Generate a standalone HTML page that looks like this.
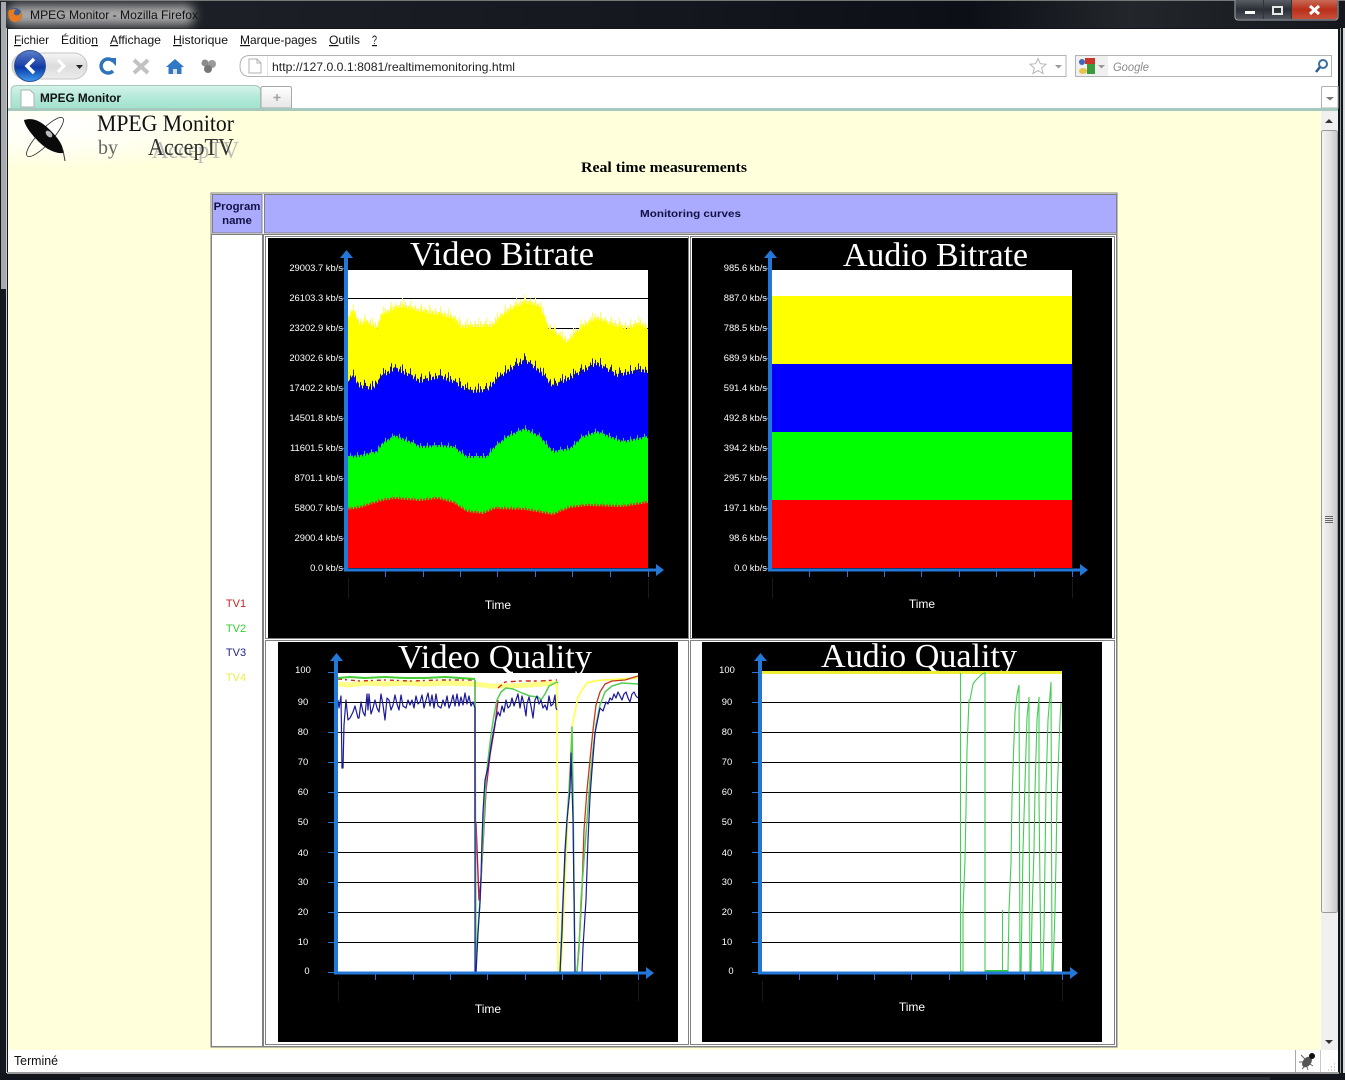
<!DOCTYPE html>
<html lang="fr"><head><meta charset="utf-8"><title>MPEG Monitor</title>
<style>
html,body{margin:0;padding:0;background:#12161c;overflow:hidden}
svg{display:block}
text{font-family:"Liberation Sans",sans-serif}
.l{fill:#fff;font-size:9.400px;text-anchor:end}
.c{fill:#fff;font-size:9.400px;text-anchor:middle}
.t{fill:#fff;font-family:"Liberation Serif",serif;font-size:34px}
.m{fill:#111;font-size:12px}
.ti{fill:#fff;font-size:12px;text-anchor:middle}
.s{font-family:"Liberation Serif",serif}
</style></head><body>
<svg width="1345" height="1080" viewBox="0 0 1345 1080" xmlns="http://www.w3.org/2000/svg">
<defs>
<linearGradient id="tb" x1="0" x2="1" y1="0" y2="0"><stop offset="0" stop-color="#20242a"/><stop offset=".5" stop-color="#14181e"/><stop offset=".72" stop-color="#0c1016"/><stop offset=".84" stop-color="#23272c"/><stop offset="1" stop-color="#14181d"/></linearGradient>
<filter id="bl" x="-10%" y="-40%" width="120%" height="180%"><feGaussianBlur stdDeviation="5"/></filter>
<linearGradient id="tab" x1="0" x2="0" y1="0" y2="1"><stop offset="0" stop-color="#d5f3ea"/><stop offset=".5" stop-color="#b4e9d9"/><stop offset="1" stop-color="#a2e2cd"/></linearGradient>
<linearGradient id="tabg" x1="0" x2="0" y1="0" y2="1"><stop offset="0" stop-color="#fff"/><stop offset="1" stop-color="#e6e6e6"/></linearGradient>
<linearGradient id="bk" x1="0" x2="0" y1="0" y2="1"><stop offset="0" stop-color="#5c80cc"/><stop offset=".5" stop-color="#1a3fa8"/><stop offset=".55" stop-color="#0a3aa8"/><stop offset="1" stop-color="#3f9cf0"/></linearGradient>
<linearGradient id="pill" x1="0" x2="0" y1="0" y2="1"><stop offset="0" stop-color="#f6f6f6"/><stop offset=".5" stop-color="#dcdcdc"/><stop offset="1" stop-color="#ececec"/></linearGradient>
<linearGradient id="sb" x1="0" x2="1" y1="0" y2="0"><stop offset="0" stop-color="#f5f5f5"/><stop offset=".5" stop-color="#e4e4e4"/><stop offset="1" stop-color="#c8c8c8"/></linearGradient>
<linearGradient id="cl" x1="0" x2="0" y1="0" y2="1"><stop offset="0" stop-color="#c96a55"/><stop offset=".5" stop-color="#b82f18"/><stop offset="1" stop-color="#c9503c"/></linearGradient>
<linearGradient id="wb" x1="0" x2="0" y1="0" y2="1"><stop offset="0" stop-color="#5a5f66"/><stop offset=".5" stop-color="#2a2e35"/><stop offset="1" stop-color="#50555c"/></linearGradient>
<radialGradient id="lg" cx=".2" cy=".25" r=".72"><stop offset="0" stop-color="#fff"/><stop offset=".5" stop-color="#fffff2"/><stop offset="1" stop-color="#ffffdc"/></radialGradient>

<pattern id="yd" width="3" height="10" patternUnits="userSpaceOnUse"><rect width="2" height="10" fill="#ffff22"/></pattern>
<pattern id="ys" width="5" height="10" patternUnits="userSpaceOnUse"><rect width="1" height="10" fill="#ffff44"/></pattern>
<pattern id="yx" width="19" height="10" patternUnits="userSpaceOnUse"><rect x="3" width="1" height="10" fill="#ffff66"/><rect x="11" width="1" height="10" fill="#ffff66"/></pattern>
<pattern id="bd" width="3" height="10" patternUnits="userSpaceOnUse"><rect width="2" height="10" fill="#0808e0"/></pattern>
<pattern id="bs" width="5" height="10" patternUnits="userSpaceOnUse"><rect width="1" height="10" fill="#10108c"/></pattern>
<pattern id="bx" width="19" height="10" patternUnits="userSpaceOnUse"><rect x="3" width="1" height="10" fill="#1a1a66"/><rect x="11" width="1" height="10" fill="#1a1a66"/></pattern>
<pattern id="gd" width="3" height="10" patternUnits="userSpaceOnUse"><rect width="2" height="10" fill="#0ff00f"/></pattern>
<pattern id="gs" width="7" height="10" patternUnits="userSpaceOnUse"><rect width="1" height="10" fill="#30c060"/></pattern>
<pattern id="rd" width="3" height="10" patternUnits="userSpaceOnUse"><rect width="2" height="10" fill="#d04010"/></pattern>
<pattern id="rs" width="7" height="10" patternUnits="userSpaceOnUse"><rect width="1" height="10" fill="#909020"/></pattern>

<polygon id="py" points="348,320 353,312 360,325 367,323 377,329 382,316 395,309 403,307 420,312 440,315 453,319 462,328 477,327 492,327 507,312 525,303 540,307 548,328 567,343 583,327 597,319 610,325 627,329 640,325 648,329 648,568 348,568"/>
<polygon id="pb" points="348,385 353,378 360,388 373,390 382,378 395,370 412,378 420,383 440,378 453,383 470,393 487,392 493,385 507,373 525,362 540,373 553,388 573,378 597,365 617,377 640,372 648,373 648,568 348,568"/>
<polygon id="pg" points="348,458 360,457 377,453 382,445 395,437 412,444 420,448 440,447 453,448 467,458 487,458 493,450 507,438 525,430 540,438 553,453 570,450 583,438 597,433 623,443 648,438 648,568 348,568"/>
<polygon id="pr" points="348,510 360,508 382,501 395,499 420,501 438,499 453,503 467,512 483,514 495,509 525,510 553,515 570,508 587,506 623,507 648,503 648,568 348,568"/>

<g id="axes">
<path d="M346 256V570" stroke="#2277d8" stroke-width="4" fill="none"/>
<path d="M344 570H658" stroke="#2277d8" stroke-width="3" fill="none"/>
<path d="M346.500 250l-6.500 8h13zM664 570l-8-6v12z" fill="#2277d8"/>
<path d="M385.500 571v6M423.500 571v6M460.500 571v6M497.500 571v6M535.500 571v6M572.500 571v6M610.500 571v6M648.500 571v6" stroke="#2277d8"/>
<path d="M348.500 578v20M648.500 578v20" stroke="#1a1a1a"/>
</g>
<path id="tk" d="M342 268.500h4M342 298.500h4M342 328.500h4M342 358.500h4M342 388.500h4M342 418.500h4M342 448.500h4M342 478.500h4M342 508.500h4M342 538.500h4M342 568.500h4" stroke="#2277d8"/>
<polyline id="aq" fill="none" points="960.500,673 960.500,971 963,971 963,910 965,860 966,810 967,750 969,700 970,700 973,684 976,680 982,674 985,673 985,971 1002.500,971 1002.500,910 1002.500,971 1008,971 1009,910 1011,863 1012,800 1013,768 1015,712 1017,695 1019,685 1020,971 1021,971 1022,910 1023,850 1025,783 1027,717 1029,697 1029,800 1030,971 1031,971 1032,915 1034,850 1035,790 1037,720 1039,697 1039,800 1041,971 1043,971 1044,930 1045,860 1046,790 1048,720 1050,695 1051,682 1052,971 1053,971 1055,910 1056,860 1057,800 1059,745 1060,720 1061,703"/>
</defs>

<!-- window frame -->
<rect width="1345" height="1080" fill="#12161c"/>
<rect width="1345" height="28" fill="url(#tb)"/>
<rect x="0" y="0" width="1345" height="1" fill="#777"/>
<rect x="1" y="2" width="5" height="287" fill="#a8abae"/>
<rect x="1" y="289" width="5" height="784" fill="#14191f"/>
<rect x="6" y="28" width="1" height="1045" fill="#c4c6c8"/>
<rect x="1340" y="28" width="1" height="1045" fill="#9aa0a6"/>
<rect x="1343" y="28" width="2" height="1045" fill="#d8d8d8"/>
<rect x="7" y="1072" width="1332" height="2" fill="#9a9a9a"/>
<rect x="80" y="1077" width="1190" height="3" fill="#2c3036"/>
<rect x="8" y="5" width="186" height="20" rx="8" fill="#a8a8a8" filter="url(#bl)"/>

<!-- firefox icon -->
<circle cx="15" cy="15" r="7" fill="#3d5f95"/>
<path d="M9 10C7 15 9 22 15 22 21 22 23 16 21 11 20 15 18 16 15 15 13 14 14 11 16 9 13 9 11 10 9 10Z" fill="#e87b20"/>
<text x="30" y="19" font-size="12" fill="#111" textLength="168" lengthAdjust="spacingAndGlyphs">MPEG Monitor - Mozilla Firefox</text>

<!-- window buttons -->
<rect x="1235" y="-2" width="103" height="22" rx="3" fill="#30343a" stroke="#a8abae"/>
<rect x="1236" y="0" width="27" height="19" fill="url(#wb)"/>
<rect x="1264" y="0" width="27" height="19" fill="url(#wb)"/>
<rect x="1292" y="0" width="45" height="19" fill="url(#cl)"/>
<rect x="1245" y="11" width="10" height="3" fill="#fff"/>
<rect x="1273" y="7" width="9" height="7" fill="none" stroke="#e8e8e8" stroke-width="2"/>
<path d="M1310 6l9 8M1319 6l-9 8" stroke="#fff" stroke-width="3"/>

<!-- browser chrome white -->
<rect x="8" y="29" width="1330" height="79" fill="#fff"/>

<!-- menu -->
<text class="m" y="44" x="14" textLength="35" lengthAdjust="spacingAndGlyphs"><tspan text-decoration="underline">F</tspan>ichier</text>
<text class="m" y="44" x="61" textLength="37" lengthAdjust="spacingAndGlyphs">Éditio<tspan text-decoration="underline">n</tspan></text>
<text class="m" y="44" x="110" textLength="51" lengthAdjust="spacingAndGlyphs"><tspan text-decoration="underline">A</tspan>ffichage</text>
<text class="m" y="44" x="173" textLength="55" lengthAdjust="spacingAndGlyphs"><tspan text-decoration="underline">H</tspan>istorique</text>
<text class="m" y="44" x="240" textLength="77" lengthAdjust="spacingAndGlyphs"><tspan text-decoration="underline">M</tspan>arque-pages</text>
<text class="m" y="44" x="329" textLength="31" lengthAdjust="spacingAndGlyphs"><tspan text-decoration="underline">O</tspan>utils</text>
<text class="m" y="44" x="372" textLength="5" lengthAdjust="spacingAndGlyphs"><tspan text-decoration="underline">?</tspan></text>

<!-- nav -->
<rect x="12" y="53" width="75" height="26" rx="13" fill="url(#pill)" stroke="#c4c4c4"/>
<circle cx="30" cy="66" r="15.500" fill="url(#bk)" stroke="#30508f"/>
<path d="M34 59l-7 7 7 7" fill="none" stroke="#fff" stroke-width="3.400"/>
<path d="M58 60l6 6-6 6" fill="none" stroke="#fff" stroke-width="3"/>
<path d="M76 65h7l-3.500 4z" fill="#222"/>
<path d="M113 61A7 7 0 1 0 113 71" fill="none" stroke="#2f73bd" stroke-width="3.500"/>
<path d="M108 58l8 0 0 8z" fill="#2f73bd"/>
<path d="M134 60l14 13M148 60l-14 13" stroke="#c2c2c2" stroke-width="4"/>
<path d="M166 67l9-8 9 8h-2.500v7h-13v-7z" fill="#2f78c4"/>
<rect x="173" y="69" width="4" height="5" fill="#ddd"/>
<circle cx="205" cy="63" r="3.500" fill="#8b8b8b"/><circle cx="212" cy="64" r="4" fill="#9a9a9a"/><circle cx="208" cy="69" r="4" fill="#777"/>

<!-- url bar -->
<path d="M250 55.500H1066V76.500H250Q240 76.500 240 66T250 55.500Z" fill="#fff" stroke="#b3b3b3"/>
<path d="M249 59h8l4 4v10h-12z" fill="#fff" stroke="#b0b0b0"/>
<path d="M257 59v4h4" fill="none" stroke="#b0b0b0"/>
<rect x="267" y="56" width="1" height="20" fill="#e4e4e4"/>
<text x="272" y="71" font-size="12" fill="#222" textLength="243" lengthAdjust="spacingAndGlyphs">http://127.0.0.1:8081/realtimemonitoring.html</text>
<path d="M1038 58.500l2.300 5.200 5.700.6-4.300 3.700 1.300 5.500-5-2.900-5 2.900 1.300-5.500-4.300-3.700 5.700-.6z" fill="#fff" stroke="#b4b4b4"/>
<path d="M1055 65h7l-3.500 3.500z" fill="#999"/>

<!-- search bar -->
<rect x="1075.500" y="55.500" width="256" height="21" fill="#fff" stroke="#b3b3b3"/>
<rect x="1076" y="56" width="32" height="20" fill="#f0f0f0"/>
<rect x="1085" y="58" width="10" height="6" fill="#c8362a"/>
<rect x="1087" y="64" width="8" height="10" fill="#3a9a3e"/>
<circle cx="1082" cy="62" r="3" fill="#3a66c0"/>
<ellipse cx="1083" cy="71" rx="4" ry="3" fill="#e8c24a"/>
<path d="M1098 65h7l-3.500 3.500z" fill="#999"/>
<text x="1113" y="71" font-size="12" font-style="italic" fill="#8a8a8a" textLength="36" lengthAdjust="spacingAndGlyphs">Google</text>
<circle cx="1323" cy="64" r="4" fill="none" stroke="#3a6e9e" stroke-width="2"/>
<path d="M1320 67l-4 5" stroke="#2b5c8c" stroke-width="2.500"/>

<!-- tabs -->
<path d="M11 109V91Q11 85.500 17 85.500H254Q260.500 85.500 260.500 91V109Z" fill="url(#tab)" stroke="#a8c8bc"/>
<path d="M21 90h9l4 4v13h-13z" fill="#fff" stroke="#b0b0b0"/>
<text x="40" y="102" font-size="12" font-weight="bold" fill="#111" textLength="81" lengthAdjust="spacingAndGlyphs">MPEG Monitor</text>
<path d="M261 108V88Q261 86.500 263 86.500H289Q291.500 86.500 291.500 88V108Z" fill="url(#tabg)" stroke="#a8a8a8"/>
<path d="M277 94v7M273.500 97.500h7" stroke="#a0a0a0" stroke-width="1.500"/>
<path d="M1321.500 108V88Q1321.500 86.500 1323 86.500H1338V108Z" fill="#fff" stroke="#b0b0b0"/>
<path d="M1326 97h8l-4 3.500z" fill="#777"/>
<rect x="8" y="108" width="1330" height="3" fill="#a6c9bd"/>

<!-- page -->
<rect x="8" y="111" width="1313" height="939" fill="#ffffdc"/>
<rect x="8" y="111" width="260" height="60" fill="url(#lg)"/>

<!-- logo -->
<ellipse cx="45" cy="137" rx="26" ry="7" fill="none" stroke="#222" stroke-width=".8" transform="rotate(-47 45 137)"/>
<path d="M24 120C34 117 42 122 50 130 58 138 64 146 63 153 57 154 47 150 39 142 31 134 25 126 24 120Z" fill="#0a0a0a"/>
<ellipse cx="49" cy="134" rx="4" ry="2.500" fill="#bbb" transform="rotate(45 49 134)"/>
<path d="M63 150l2 11" stroke="#333"/>
<text class="s" x="97" y="131" font-size="23" fill="#111" textLength="137" lengthAdjust="spacingAndGlyphs">MPEG Monitor</text>
<text class="s" x="98" y="154" font-size="20" fill="#666">by</text>
<text class="s" x="152" y="158" font-size="24" fill="#bbb" textLength="87" lengthAdjust="spacingAndGlyphs">AccepTV</text>
<text class="s" x="148" y="155" font-size="24" fill="#333" textLength="86" lengthAdjust="spacingAndGlyphs">AccepTV</text>
<text class="s" x="581" y="172" font-size="15" font-weight="bold" fill="#000" textLength="166" lengthAdjust="spacingAndGlyphs">Real time measurements</text>

<!-- table -->
<rect x="211" y="193" width="906" height="854" fill="#fff" stroke="#808080"/>
<rect x="212.500" y="194.500" width="49.500" height="38.500" fill="#aaaaff" stroke="#808080"/>
<rect x="264.500" y="194.500" width="852" height="38.500" fill="#aaaaff" stroke="#808080"/>
<text x="237" y="210" font-size="11.400" font-weight="bold" fill="#111144" text-anchor="middle">Program</text>
<text x="237" y="224" font-size="11.400" font-weight="bold" fill="#111144" text-anchor="middle">name</text>
<text x="640" y="217" font-size="10.500" font-weight="bold" fill="#111144" textLength="101" lengthAdjust="spacingAndGlyphs">Monitoring curves</text>
<rect x="211.500" y="234.500" width="51" height="812" fill="#fff" stroke="#808080"/>
<rect x="263.500" y="234.500" width="853" height="812" fill="#fff" stroke="#808080"/>
<rect x="265.500" y="236.500" width="423" height="402" fill="#fff" stroke="#808080"/>
<rect x="690.500" y="236.500" width="424" height="402" fill="#fff" stroke="#808080"/>
<rect x="265.500" y="640.500" width="423" height="404" fill="#fff" stroke="#808080"/>
<rect x="690.500" y="640.500" width="424" height="404" fill="#fff" stroke="#808080"/>
<text x="236" y="607" font-size="11" fill="#cc2222" text-anchor="middle">TV1</text>
<text x="236" y="632" font-size="11" fill="#33cc33" text-anchor="middle">TV2</text>
<text x="236" y="656" font-size="11" fill="#222288" text-anchor="middle">TV3</text>
<text x="236" y="681" font-size="11" fill="#eeee44" text-anchor="middle">TV4</text>

<!-- ========== chart 1 ========== -->
<rect x="268" y="238" width="420" height="400"/>
<text class="t" x="410" y="265" textLength="184" lengthAdjust="spacingAndGlyphs">Video Bitrate</text>
<rect x="348" y="270" width="300" height="298" fill="#fff"/>
<path d="M348 298.500H648M348 328.500H648" stroke="#000"/>
<use href="#py" y="-9" fill="url(#yx)"/><use href="#py" y="-6" fill="url(#ys)"/><use href="#py" y="-3" fill="url(#yd)"/><use href="#py" fill="#ff0"/>
<use href="#pb" y="-9" fill="url(#bx)"/><use href="#pb" y="-6" fill="url(#bs)"/><use href="#pb" y="-3" fill="url(#bd)"/><use href="#pb" fill="#00f"/>
<use href="#pg" y="-5" fill="url(#gs)"/><use href="#pg" y="-2" fill="url(#gd)"/><use href="#pg" fill="#0f0"/>
<use href="#pr" y="-4" fill="url(#rs)"/><use href="#pr" y="-2" fill="url(#rd)"/><use href="#pr" fill="#f00"/>
<use href="#axes"/><use href="#tk"/>
<text class="l" x="343" y="271">29003.7 kb/s</text><text class="l" x="343" y="301">26103.3 kb/s</text><text class="l" x="343" y="331">23202.9 kb/s</text><text class="l" x="343" y="361">20302.6 kb/s</text><text class="l" x="343" y="391">17402.2 kb/s</text><text class="l" x="343" y="421">14501.8 kb/s</text><text class="l" x="343" y="451">11601.5 kb/s</text><text class="l" x="343" y="481">8701.1 kb/s</text><text class="l" x="343" y="511">5800.7 kb/s</text><text class="l" x="343" y="541">2900.4 kb/s</text><text class="l" x="343" y="571">0.0 kb/s</text>
<text class="ti" x="498" y="609">Time</text>

<!-- ========== chart 2 ========== -->
<rect x="692" y="238" width="420" height="400"/>
<text class="t" x="843" y="266" textLength="185" lengthAdjust="spacingAndGlyphs">Audio Bitrate</text>
<rect x="772" y="270" width="300" height="26" fill="#fff"/>
<rect x="772" y="296" width="300" height="68" fill="#ff0"/>
<rect x="772" y="364" width="300" height="68" fill="#00f"/>
<rect x="772" y="432" width="300" height="68" fill="#0f0"/>
<rect x="772" y="500" width="300" height="68" fill="#f00"/>
<use href="#axes" x="424"/><use href="#tk" x="424"/>
<text class="l" x="767" y="271">985.6 kb/s</text><text class="l" x="767" y="301">887.0 kb/s</text><text class="l" x="767" y="331">788.5 kb/s</text><text class="l" x="767" y="361">689.9 kb/s</text><text class="l" x="767" y="391">591.4 kb/s</text><text class="l" x="767" y="421">492.8 kb/s</text><text class="l" x="767" y="451">394.2 kb/s</text><text class="l" x="767" y="481">295.7 kb/s</text><text class="l" x="767" y="511">197.1 kb/s</text><text class="l" x="767" y="541">98.6 kb/s</text><text class="l" x="767" y="571">0.0 kb/s</text>
<text class="ti" x="922" y="608">Time</text>

<!-- ========== chart 3 ========== -->
<rect x="278" y="642" width="400" height="400"/>
<text class="t" x="398" y="668" textLength="194" lengthAdjust="spacingAndGlyphs">Video Quality</text>
<rect x="338" y="673" width="300" height="299" fill="#fff"/>
<path d="M338 702.500H638M338 732.500H638M338 762.500H638M338 792.500H638M338 822.500H638M338 852.500H638M338 882.500H638M338 912.500H638M338 942.500H638" stroke="#000"/>
<g fill="none" stroke-linejoin="round">
<polyline stroke="#ffff88" stroke-width="5" points="338,684 350,685 365,683 385,684 405,683 425,684 445,683 475,684 490,686 510,686 530,685 557,683"/>
<polyline stroke="#ffff55" stroke-width="1.700" points="557,683 558,972 561,972 563,930 566,860 569,790 572,727 575,712 578,697 582,690 587,683 595,681 603,680 620,679 638,678"/>
<polyline stroke="#cc2a10" stroke-width="1.400" stroke-dasharray="4 3 2 4" points="338,679 360,681 385,680 410,681 440,680 475,680"/>
<polyline stroke="#c01060" stroke-width="1.400" points="475,680 475,822 476,822 479,900 481,880 483,845 486,790 490,755 495,725 498,700"/>
<polyline stroke="#cc2a10" stroke-width="1.400" stroke-dasharray="5 3 3 4" points="498,688 505,682 520,681 540,681 557,680"/>
<polyline stroke="#c63a20" stroke-width="1.300" points="577,972 580,930 582,890 584,830 587,790 590,760 593,730 596,705 600,692 605,684 612,681 625,680 638,676"/>
<polyline stroke="#44cc33" stroke-width="2" points="338,678 350,677 365,678 385,677 405,678 425,678 445,677 475,679"/>
<polyline stroke="#55cc55" stroke-width="1.500" points="475,680 476,972 478,930 480,900 482,860 484,820 486,780 488,760 491,735 494,715 497,700 501,692 506,688 513,689 522,693 530,696 538,697 541,700 545,694 549,686 557,682 558,683"/>
<polyline stroke="#55cc55" stroke-width="1.500" points="560,972 562,920 564,880 567,820 569,790 571,755 572,727 573,790 575,972 577,972 579,950 581,900 584,860 587,820 590,780 593,750 596,725 600,705 605,692 612,686 622,683 638,684"/>
<polyline stroke="#1a1a9a" stroke-width="1.200" points="338,700 339,708 341,696 342,768 343,768 344,725 346,700 348,720 350,718 353,712 355,706 358,718 359,718 361,702 363,712 365,716 367,694 368,710 369,694 371,714 373,708 375,700 377,708 379,712 381,694 383,705 385,720 387,698 389,700 391,710 393,705 395,695 397,704 399,710 401,695 403,706 406,708 408,700 410,705 412,700 414,708 416,696 418,704 420,702 422,695 424,708 426,700 428,693 430,706 432,695 434,708 436,694 438,706 441,708 443,700 445,706 447,696 449,708 451,703 453,695 455,706 457,694 459,706 461,697 463,705 465,693 467,704 469,696 471,706 473,702 475,708 475,972 476,972 478,933 480,903 481,877 482,840 483,812 485,780 488,767 492,740 495,723 498,712 500,716 502,706 504,712 506,700 508,708 510,706 512,698 514,706 516,700 518,694 520,708 522,696 524,704 526,716 527,704 529,697 531,706 533,718 535,700 537,696 539,704 541,700 543,708 545,705 547,710 549,696 551,706 553,704 555,695 556,708 557,710"/>
<polyline stroke="#1a1a9a" stroke-width="1.200" points="560,972 562,933 563,902 565,850 567,820 570,790 571,753 573,820 575,972 577,972"/>
<polyline stroke="#1a1a9a" stroke-width="1.200" points="582,972 583,947 586,900 588,840 590,797 592,770 595,733 598,718 600,708 603,711 606,702 608,704 610,698 612,700 614,694 616,698 618,692 620,696 622,700 624,694 626,692 628,698 630,702 632,694 634,692 636,696 638,698"/>
</g>
<use href="#axes" x="-10" y="403"/>
<path d="M328 672.500h8M328 702.500h8M328 732.500h8M328 762.500h8M328 792.500h8M328 822.500h8M328 852.500h8M328 882.500h8M328 912.500h8M328 942.500h8M328 972.500h8" stroke="#2277d8"/>
<text class="c" x="303" y="673">100</text><text class="c" x="303" y="705">90</text><text class="c" x="303" y="735">80</text><text class="c" x="303" y="765">70</text><text class="c" x="303" y="795">60</text><text class="c" x="303" y="825">50</text><text class="c" x="303" y="856">40</text><text class="c" x="303" y="885">30</text><text class="c" x="303" y="915">20</text><text class="c" x="303" y="945">10</text><text class="c" x="307" y="974">0</text>
<text class="ti" x="488" y="1013">Time</text>

<!-- ========== chart 4 ========== -->
<rect x="702" y="642" width="400" height="400"/>
<text class="t" x="821" y="667" textLength="196" lengthAdjust="spacingAndGlyphs">Audio Quality</text>
<rect x="762" y="673" width="300" height="299" fill="#fff"/>
<path d="M762 702.500H1062M762 732.500H1062M762 762.500H1062M762 792.500H1062M762 822.500H1062M762 852.500H1062M762 882.500H1062M762 912.500H1062M762 942.500H1062" stroke="#000"/>
<rect x="762" y="671" width="300" height="3" fill="#eeee33"/>
<use href="#aq" stroke="#44cc55" stroke-width="1.100"/>
<rect x="985" y="970" width="23" height="2.500" fill="#33cc44"/>
<use href="#axes" x="414" y="403"/>
<path d="M752 672.500h8M752 702.500h8M752 732.500h8M752 762.500h8M752 792.500h8M752 822.500h8M752 852.500h8M752 882.500h8M752 912.500h8M752 942.500h8M752 972.500h8" stroke="#2277d8"/>
<text class="c" x="727" y="673">100</text><text class="c" x="727" y="705">90</text><text class="c" x="727" y="735">80</text><text class="c" x="727" y="765">70</text><text class="c" x="727" y="795">60</text><text class="c" x="727" y="825">50</text><text class="c" x="727" y="856">40</text><text class="c" x="727" y="885">30</text><text class="c" x="727" y="915">20</text><text class="c" x="727" y="945">10</text><text class="c" x="731" y="974">0</text>
<text class="ti" x="912" y="1011">Time</text>

<!-- scrollbar -->
<rect x="1321" y="111" width="17" height="939" fill="#f0f0f0"/>
<path d="M1325 123h8l-4-4z" fill="#333"/>
<rect x="1321.500" y="130.500" width="16" height="782" rx="2" fill="url(#sb)" stroke="#9a9a9a"/>
<path d="M1325 516.500h8M1325 518.500h8M1325 520.500h8M1325 522.500h8" stroke="#666"/>
<path d="M1325 1040h8l-4 4z" fill="#333"/>

<!-- status bar -->
<rect x="8" y="1050" width="1330" height="22" fill="#fff"/>
<text x="14" y="1065" font-size="12.500" fill="#111" textLength="44" lengthAdjust="spacingAndGlyphs">Terminé</text>
<rect x="1295" y="1050" width="1" height="22" fill="#a8a8a8"/>
<rect x="1320" y="1050" width="1" height="22" fill="#c8c8c8"/>
<ellipse cx="1307" cy="1062" rx="4" ry="6" fill="#555" transform="rotate(40 1307 1062)"/>
<path d="M1301 1055l4 4M1299 1062h4M1302 1069l3-3M1313 1066l-3-2M1308 1070l-1-3" stroke="#666"/>
<circle cx="1312" cy="1056" r="3" fill="#111"/>
<path d="M1334 1064h1M1331 1067h1M1334 1067h1M1328 1070h1M1331 1070h1M1334 1070h1" stroke="#aaa"/>
</svg>
</body></html>
